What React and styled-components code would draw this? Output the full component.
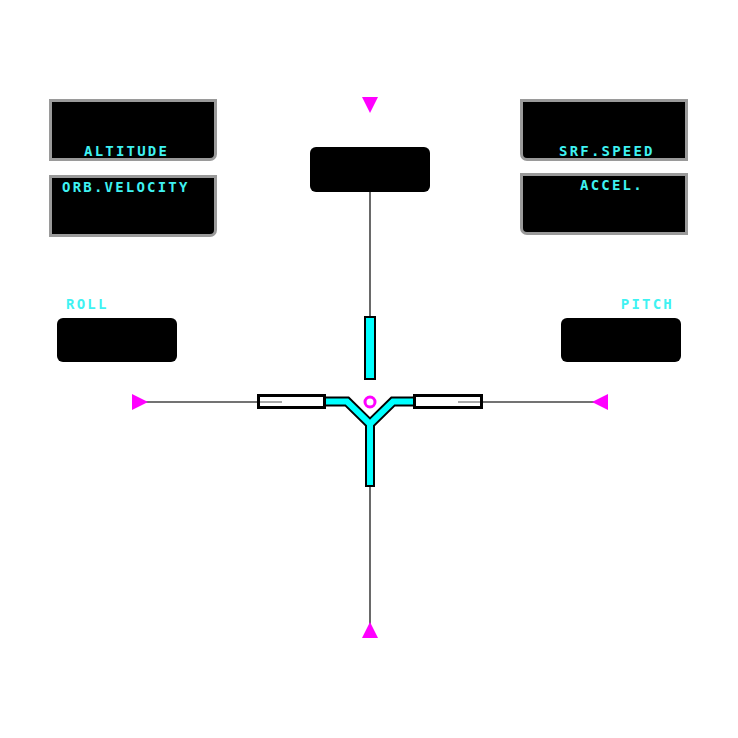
import React from 'react';
import styled, { createGlobalStyle } from 'styled-components';

const GlobalStyle = createGlobalStyle`
  html, body {
    margin: 0;
    padding: 0;
    background: #fff;
  }
`;

const CYAN = '#00ffff';
const MAGENTA = '#ff00ff';

const leftPanels = [
  { label: 'ALTITUDE', at: 'bottom', pad: 32 },
  { label: 'ORB.VELOCITY', at: 'top', pad: 10 },
];

const rightPanels = [
  { label: 'SRF.SPEED', at: 'bottom', pad: 36 },
  { label: 'ACCEL.', at: 'top', pad: 57 },
];

const Reticle = () => (
  <Drawing viewBox="0 0 738 738" width="738" height="738">
    {/* axis lines */}
    <g stroke="#444" strokeWidth="1.6">
      <line x1="370" y1="192" x2="370" y2="316" />
      <line x1="370" y1="487" x2="370" y2="624" />
      <line x1="146" y1="402" x2="258" y2="402" />
      <line x1="482" y1="402" x2="594" y2="402" />
    </g>

    {/* end markers */}
    <g fill={MAGENTA}>
      <polygon points="362,97 378,97 370,113" />
      <polygon points="362,638 378,638 370,622" />
      <polygon points="132,394 132,410 148,402" />
      <polygon points="608,394 608,410 592,402" />
    </g>

    {/* upper bar */}
    <rect x="365" y="317" width="10" height="62" fill={CYAN} stroke="#000" strokeWidth="2" />

    {/* wing */}
    <path
      d="M324 401.5 H347 L370 424 L393 401.5 H415 M370 424 V487"
      fill="none"
      stroke="#000"
      strokeWidth="10"
      strokeLinejoin="miter"
    />
    <path
      d="M324 401.5 H347 L370 424 L393 401.5 H415 M370 424 V485"
      fill="none"
      stroke={CYAN}
      strokeWidth="6"
      strokeLinejoin="miter"
    />

    {/* wing tips */}
    <rect x="258.5" y="395.5" width="66" height="12" fill="#fff" stroke="#000" strokeWidth="3" />
    <rect x="414.5" y="395.5" width="67" height="12" fill="#fff" stroke="#000" strokeWidth="3" />
    <g stroke="#505050" strokeWidth="1">
      <line x1="260" y1="402" x2="282" y2="402" />
      <line x1="458" y1="402" x2="480" y2="402" />
    </g>

    <circle cx="370" cy="402" r="5" fill="none" stroke={MAGENTA} strokeWidth="3" />
  </Drawing>
);

const App = () => (
  <>
    <GlobalStyle />
    <Stage>
      <Reticle />
      <Content>
        <TopRow>
          <PanelColumn gap={14}>
            {leftPanels.map(p => (
              <Panel key={p.label} side="left" at={p.at}>
                <Label pad={p.pad}>{p.label}</Label>
              </Panel>
            ))}
          </PanelColumn>
          <CenterBox />
          <PanelColumn gap={12}>
            {rightPanels.map(p => (
              <Panel key={p.label} side="right" at={p.at}>
                <Label pad={p.pad}>{p.label}</Label>
              </Panel>
            ))}
          </PanelColumn>
        </TopRow>

        <AttitudeRow>
          <Readout>
            <Label pad={9}>ROLL</Label>
            <Screen />
          </Readout>
          <Readout align="right">
            <Label pad={7}>PITCH</Label>
            <Screen />
          </Readout>
        </AttitudeRow>
      </Content>
    </Stage>
  </>
);

const Stage = styled.div`
  position: relative;
  width: 738px;
  height: 738px;
  overflow: hidden;
  background: #fff;
`;

const Drawing = styled.svg`
  position: absolute;
  inset: 0;
  z-index: 0;
`;

const Content = styled.div`
  position: relative;
  z-index: 1;
  display: flex;
  flex-direction: column;
  padding-top: 99px;
`;

const TopRow = styled.div`
  display: grid;
  grid-template-columns: 168px 1fr 168px;
  align-items: start;
  padding: 0 50px 0 49px;
`;

const PanelColumn = styled.div`
  display: flex;
  flex-direction: column;
  gap: ${p => p.gap}px;
`;

const Panel = styled.div`
  box-sizing: border-box;
  height: 62px;
  background: #000;
  border: 3px solid #9a9a9a;
  border-radius: ${p => (p.side === 'left' ? '0 0 7px 0' : '0 0 0 7px')};
  display: flex;
  align-items: ${p => (p.at === 'bottom' ? 'flex-end' : 'flex-start')};
  padding: 2px 0 0;
`;

const Label = styled.div`
  font-family: "DejaVu Sans Mono", "Liberation Mono", monospace;
  font-weight: bold;
  font-size: 14px;
  line-height: 14px;
  letter-spacing: 2.2px;
  color: #3ff2f2;
  padding: 0 ${p => p.pad}px;
  white-space: nowrap;
`;

const CenterBox = styled.div`
  justify-self: start;
  margin: 48px 0 0 93px;
  width: 120px;
  height: 45px;
  background: #000;
  border-radius: 6px;
`;

const AttitudeRow = styled.div`
  display: flex;
  justify-content: space-between;
  padding: 0 57px;
  margin-top: 60px;
`;

const Readout = styled.div`
  display: flex;
  flex-direction: column;
  gap: 7px;
  text-align: ${p => p.align || 'left'};
`;

const Screen = styled.div`
  width: 120px;
  height: 44px;
  background: #000;
  border-radius: 6px;
`;

export default App;
